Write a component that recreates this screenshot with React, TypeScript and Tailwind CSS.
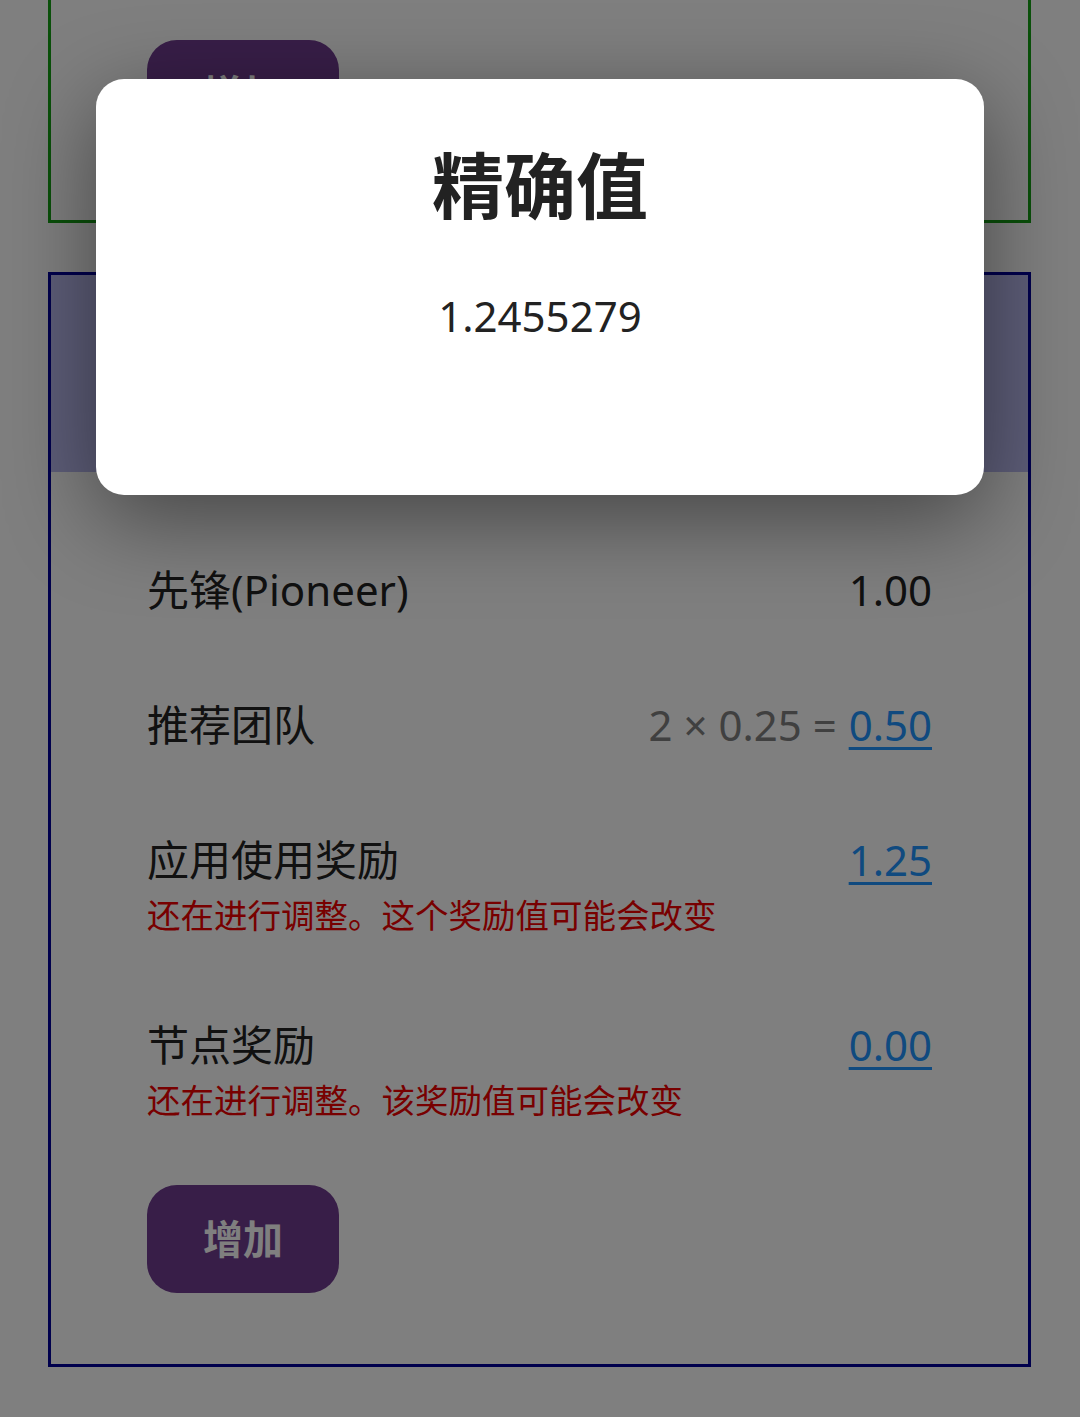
import React from "react";

const font = {
    fontFamily: '"Noto Sans", "Noto Sans CJK SC", sans-serif',
};

interface RewardRow {
    label: string;
    formula?: string;
    value: string;
    link: boolean;
    note?: string;
}

const rows: RewardRow[] = [
    { label: "先锋(Pioneer)", value: "1.00", link: false },
    { label: "推荐团队", formula: "2 × 0.25 =", value: "0.50", link: true },
    {
        label: "应用使用奖励",
        value: "1.25",
        link: true,
        note: "还在进行调整。这个奖励值可能会改变",
    },
    {
        label: "节点奖励",
        value: "0.00",
        link: true,
        note: "还在进行调整。该奖励值可能会改变",
    },
];

function AddButton() {
    return (
        <button className="w-[192px] h-[108px] rounded-[30px] bg-[#703c90] text-white text-[40px] font-bold leading-none">
            增加
        </button>
    );
}

function Row({ row }: { row: RewardRow }) {
    return (
        <div className={row.note ? "pt-[40px] pb-[37px]" : "py-[40px]"}>
            <div className="flex items-center justify-between text-[42px] leading-[55px] text-[#222]">
                <span>{row.label}</span>
                <span className="flex items-center gap-[12px]">
                    {row.formula && <span className="text-[#808080]">{row.formula}</span>}
                    <span
                        className={
                            row.link
                                ? "text-[#2094ff] underline decoration-[3px] underline-offset-[6px]"
                                : ""
                        }
                    >
                        {row.value}
                    </span>
                </span>
            </div>
            {row.note && (
                <div className="mt-[3px] text-[33.5px] leading-[50px] text-[#f00000]">{row.note}</div>
            )}
        </div>
    );
}

export default function App() {
    return (
        <div className="relative h-[1417px] overflow-hidden bg-white" style={font}>
            <div className="pl-[48px] pr-[49px]">
                {/* карточка сверху, прокручена за край */}
                <div className="-mt-[40px] border-[3px] border-[#14a014] pt-[77px] pb-[72px] px-[96px]">
                    <AddButton />
                </div>

                <div className="mt-[49px] border-[3px] border-[#00009a]">
                    <div className="h-[197px] bg-[#babaf0]" />
                    <div className="px-[96px] pt-[50px] pb-[71px]">
                        {rows.map((row) => (
                            <Row key={row.label} row={row} />
                        ))}
                        <div className="mt-[23px]">
                            <AddButton />
                        </div>
                    </div>
                </div>
            </div>

            {/* диалог */}
            <div className="absolute inset-0 bg-black/50 flex justify-center items-start pt-[79px]">
                <div className="w-[888px] h-[416px] rounded-[28px] bg-white shadow-[0_24px_90px_rgba(0,0,0,0.45)] pt-[56px] text-center text-[#222]">
                    <div className="text-[72px] font-bold leading-[100px]">精确值</div>
                    <div className="mt-[51px] text-[42px] leading-[60px]">1.2455279</div>
                </div>
            </div>
        </div>
    );
}
